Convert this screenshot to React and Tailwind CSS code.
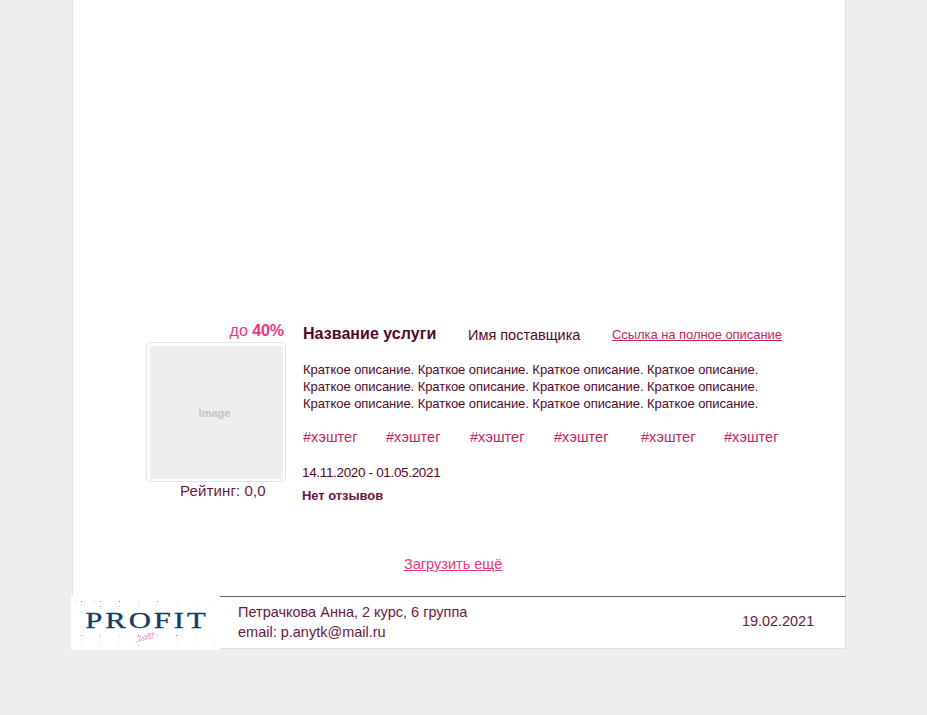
const description = 'Краткое описание. Краткое описание. Краткое описание. Краткое описание.';

const logoDots = [
  [4, 6, 0.4], [10, 6, 1], [29, 6, 0.6], [23, 6, 0.4], [48, 6, 1], [67, 6, 0.3], [86, 6, 0.8], [105, 6, 0.3], [124, 6, 0.3],
  [4, 16, 0.2], [10, 16, 0.3], [29, 11, 0.8], [48, 11, 0.3], [67, 11, 0.3], [86, 16, 0.2], [143, 6, 0.2],
  [10, 40, 1], [29, 40, 0.7], [48, 40, 0.4], [67, 40, 1], [86, 40, 0.4], [105, 40, 0.9], [124, 40, 0.4], [143, 40, 0.2],
  [10, 50, 0.4], [29, 50, 0.5], [48, 50, 0.3], [67, 50, 0.6], [86, 50, 0.4], [105, 50, 0.3], [124, 50, 0.3], [143, 50, 0.3],
];

function Logo() {
  return (
    <svg className="-ml-[2px] -mt-[2px] h-[55px] w-[149px] shrink-0 bg-white" viewBox="0 0 149 55">
      {logoDots.map(([x, y, opacity]) => (
        <rect key={`${x}-${y}`} x={x} y={y} width="1" height="1" fill="#777" opacity={opacity} />
      ))}
      <text transform="translate(14.2 33) scale(1.28 1)" letterSpacing="2.3" fill="#103c66" stroke="#103c66" strokeWidth="0.3" fontFamily="Liberation Serif, serif" fontSize="24">PROFIT</text>
      <g fill="none" stroke="#f58bab" strokeWidth="1" strokeDasharray="1.3 1.1">
        <path d="M66 42l4-1-2 4M71 43l3-3 1 3-3 3M75 43l4-5-1 6M79 41l4-3-2 5M65 47l8-2 9-2M76 39l6-1M68 46l6-4 4-1" />
      </g>
    </svg>
  );
}

function Preview() {
  return (
    <div className="w-[140px]">
      <div className="h-[21px] pr-[2px] text-right text-[16px] leading-[20px] tracking-[-0.05px] text-[#e9377a]">до <b>40%</b></div>
      <div className="h-[140px] rounded-[4px] border border-[#e2e2e2] bg-white p-[3px] pr-[2px] pb-[2px]">
        <div className="flex h-full items-center justify-center bg-[#eeeeee] pt-[1px] pr-[4px] text-[11px] font-bold text-[#c2c2c2]">Image</div>
      </div>
      <div className="pl-[34px] text-[15px] leading-[18px] tracking-[0.13px] text-[#6a173f]">Рейтинг: 0,0</div>
    </div>
  );
}

function Details() {
  return (
    <div className="ml-[17px] flex w-[490px] flex-col">
      <div className="flex h-[27px]">
        <h2 className="w-[165px] pt-[3px] text-[16px] font-bold leading-[20px] tracking-[0.04px] text-[#51082a]">Название услуги</h2>
        <span className="w-[144px] pt-[4px] text-[14.5px] leading-[20px]">Имя поставщика</span>
        <a href="#" className="pt-[4px] text-[13px] leading-[20px] tracking-[-0.06px] text-[#bd2860] underline">Ссылка на полное описание</a>
      </div>
      <div className="mt-[13px] text-[13px] leading-[17px] tracking-[-0.06px]">
        <p>{description}</p>
        <p>{description}</p>
        <p>{description}</p>
      </div>
      <div className="mt-[15px] flex text-[14.5px] leading-[20px] tracking-[0.06px] text-[#bd2860]">
        <span className="w-[83px]">#хэштег</span>
        <span className="w-[84px]">#хэштег</span>
        <span className="w-[84px]">#хэштег</span>
        <span className="w-[87px]">#хэштег</span>
        <span className="w-[83px]">#хэштег</span>
        <span>#хэштег</span>
      </div>
      <div className="-ml-px mt-[17px] text-[13.5px] leading-[18px] tracking-[-0.34px]">14.11.2020 - 01.05.2021</div>
      <div className="-ml-px mt-[5px] text-[13px] font-bold leading-[18px] tracking-[-0.05px] text-[#6a173f]">Нет отзывов</div>
    </div>
  );
}

export default function App() {
  return (
    <div className="h-[715px] w-full overflow-hidden bg-[#eeeeee] pl-[72px] font-['Liberation_Sans',sans-serif] whitespace-nowrap text-[#51082a]">
      <main className="flex h-[649px] w-[774px] flex-col border-x border-b border-[#dddddd] bg-white">
        <section className="mt-[321px] flex h-[233px] pl-[73px]">
          <Preview />
          <Details />
        </section>
        <div className="h-[42px] pl-[331px] text-[14.5px] leading-[20px]">
          <a href="#" className="text-[#e9377a] underline">Загрузить ещё</a>
        </div>
        <footer className="-mr-px flex h-[52px] shrink-0 border-t border-[#666666] text-[#6a173f]">
          <Logo />
          <address className="ml-[18px] w-[504px] pt-[5px] text-[14.5px] not-italic leading-[20px]">
            <p>Петрачкова Анна, 2 курс, 6 группа</p>
            <p>email: p.anytk@mail.ru</p>
          </address>
          <time className="pt-[14px] text-[14.5px] leading-[20px] tracking-[-0.04px]">19.02.2021</time>
        </footer>
      </main>
    </div>
  );
}
